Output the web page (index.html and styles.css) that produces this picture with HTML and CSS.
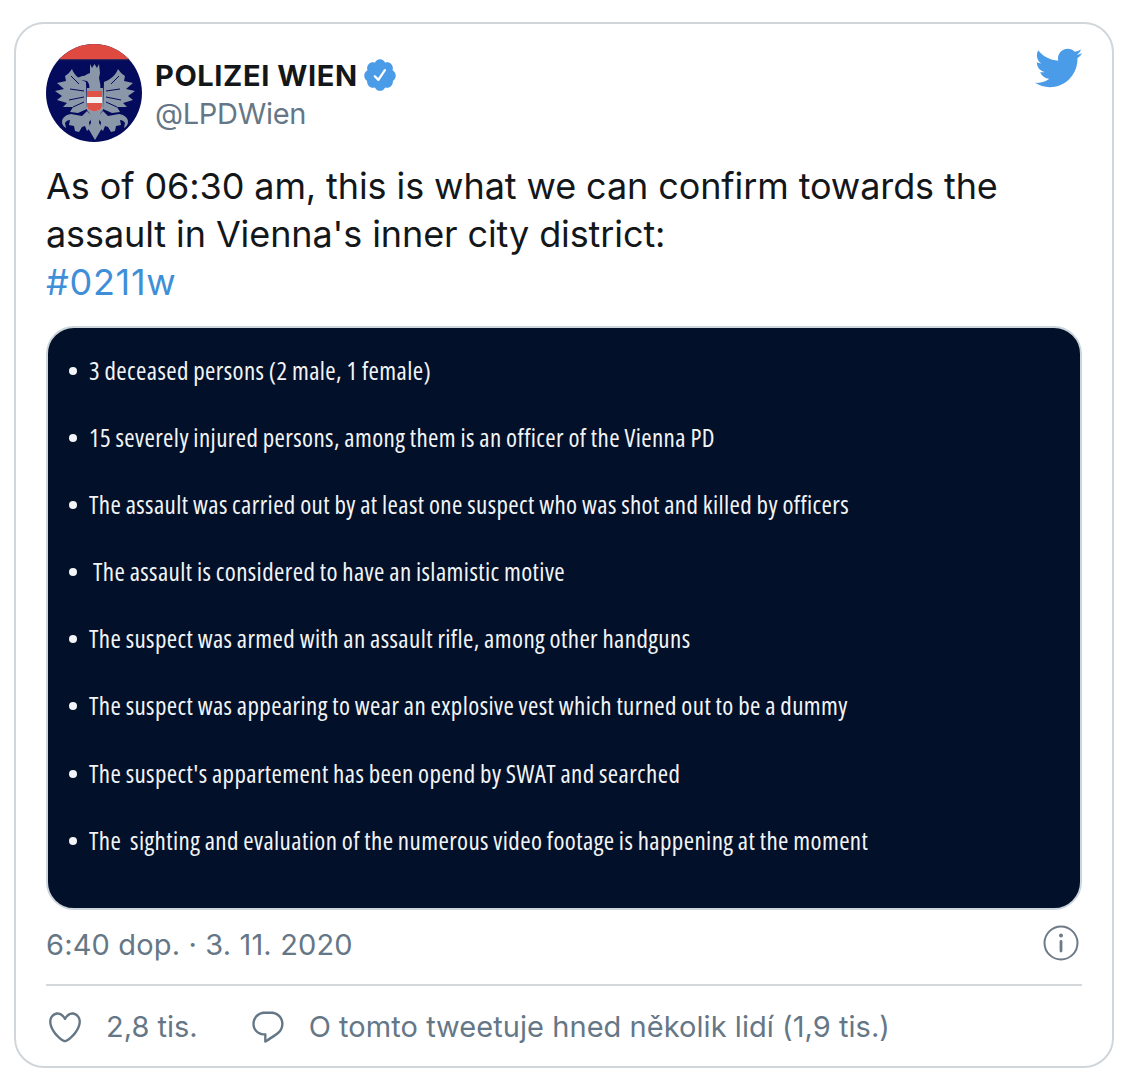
FILE: index.html
```html
<!DOCTYPE html>
<html lang="en">
<head>
<meta charset="utf-8">
<title>Polizei Wien tweet</title>
<link rel="stylesheet" href="styles.css">
</head>
<body>
<article class="card">
  <header class="head">
    <svg class="avatar" viewBox="0 0 96 98" aria-hidden="true">
      <defs>
        <clipPath id="round"><ellipse cx="48" cy="49" rx="48" ry="49"/></clipPath>
        <g id="wing">
          <path fill="#8a97a8" d="M26 25c2 6 8 11 14 13l1 27-9 4-8-1 3-5-10 0 4-4-10-3 5-4-7-5 9-2-7-6 9-2-1-5c3-2 5-4 7-7z"/>
          <path fill="none" stroke="#040a5c" stroke-width="1" d="M38 47l-14-2M38 53l-15 3M38 58l-11 5M33 40l-8-8"/>
          <path fill="#8a97a8" d="M41 67l-5 5-11-2c-6 1-9 4-9 8 0 3 2 5 4 6l-1-5c1-2 3-3 5-3l-1 5 5 1 1 5 4 1 3-5 3-1 2 5 3-3-1-6 4-5z"/>
        </g>
      </defs>
      <g clip-path="url(#round)">
        <rect width="96" height="98" fill="#040a5c"/>
        <rect width="96" height="15" fill="#de4a40"/>
        <rect y="15" width="96" height="1.200" fill="#3b2b58"/>
        <use href="#wing"/>
        <use href="#wing" transform="matrix(-1 0 0 1 98 0)"/>
        <g fill="#8a97a8">
          <path d="M44 20l2 4 2.500-4 2.500 4 2-4 1 9-1 5c1 5 2 8 1 12H43c1-4 0-7-2-9l-6-1-4-2 8-3 5-2z"/>
          <path d="M41 44h16v22l-3 4-1 9 3 5-7 12-7-12 3-5-1-9-3-4z"/>
        </g>
        <path fill="#040a5c" d="M33 30l6-1 2 1-3 2z"/>
        <path d="M41 47h15v15c0 3-3 5-7.500 5S41 65 41 62z" fill="#f3f0ef"/>
        <path d="M41 47h15v6H41zM41 59h15v3c0 3-3 5-7.500 5S41 65 41 62z" fill="#dd5347"/>
      </g>
    </svg>
    <div class="who">
      <div class="name"><span>POLIZEI WIEN</span><svg class="badge" viewBox="0 0 24 24" aria-hidden="true"><path fill="#fff" d="M6 7h12v10H6z"/><path fill="#4a9be8" d="M22.500 12.500c0-1.580-.875-2.950-2.148-3.600.154-.435.238-.905.238-1.400 0-2.210-1.710-3.998-3.818-3.998-.47 0-.92.084-1.336.25C14.818 2.415 13.510 1.500 12 1.500s-2.816.917-3.437 2.250c-.415-.165-.866-.25-1.336-.25-2.110 0-3.818 1.790-3.818 4 0 .494.083.964.237 1.400-1.272.65-2.147 2.018-2.147 3.600 0 1.495.782 2.798 1.942 3.486-.02.17-.032.34-.032.514 0 2.210 1.708 4 3.818 4 .47 0 .92-.086 1.335-.25.62 1.334 1.926 2.250 3.437 2.250 1.512 0 2.818-.916 3.437-2.250.415.163.865.248 1.336.248 2.110 0 3.818-1.790 3.818-4 0-.174-.012-.344-.033-.513 1.158-.687 1.943-1.990 1.943-3.484zm-6.616-3.334l-4.334 6.500c-.145.217-.382.334-.625.334-.143 0-.288-.04-.416-.126l-.115-.094-2.415-2.415c-.293-.293-.293-.768 0-1.060s.768-.294 1.060 0l1.770 1.767 3.825-5.740c.23-.345.696-.436 1.040-.207.346.23.44.696.21 1.040z"/></svg></div>
      <div class="handle">@LPDWien</div>
    </div>
    <svg class="bird" viewBox="0 0 24 24" aria-hidden="true"><path fill="#4a9be8" d="M23.643 4.937c-.835.37-1.732.62-2.675.733.962-.576 1.700-1.490 2.048-2.578-.9.534-1.897.922-2.958 1.130-.85-.904-2.060-1.470-3.400-1.470-2.572 0-4.658 2.086-4.658 4.660 0 .364.042.718.12 1.060-3.873-.195-7.304-2.050-9.602-4.868-.4.69-.63 1.490-.63 2.342 0 1.616.823 3.043 2.072 3.878-.764-.025-1.482-.234-2.110-.583v.06c0 2.257 1.605 4.140 3.737 4.568-.392.106-.803.162-1.227.162-.3 0-.593-.028-.877-.082.593 1.850 2.313 3.198 4.352 3.234-1.595 1.250-3.604 1.995-5.786 1.995-.376 0-.747-.022-1.112-.065 2.062 1.323 4.510 2.093 7.140 2.093 8.570 0 13.255-7.098 13.255-13.254 0-.2-.005-.402-.014-.602.91-.658 1.700-1.477 2.323-2.410z"/></svg>
  </header>
  <p class="body">As of 06:30 am, this is what we can confirm towards the<br>assault in Vienna's inner city district:<br><a class="tag">#0211w</a></p>
  <ul class="media">
    <li>3 deceased persons (2 male, 1 female)</li>
    <li>15 severely injured persons, among them is an officer of the Vienna PD</li>
    <li>The assault was carried out by at least one suspect who was shot and killed by officers</li>
    <li class="indent">The assault is considered to have an islamistic motive</li>
    <li>The suspect was armed with an assault rifle, among other handguns</li>
    <li>The suspect was appearing to wear an explosive vest which turned out to be a dummy</li>
    <li>The suspect's appartement has been opend by SWAT and searched</li>
    <li>The  sighting and evaluation of the numerous video footage is happening at the moment</li>
  </ul>
  <div class="meta">
    <span class="date">6:40 dop. · 3. 11. 2020</span>
    <svg class="info" viewBox="0 0 36 36" aria-hidden="true"><circle cx="18" cy="18" r="16.500" fill="none" stroke="#6e7a87" stroke-width="2"/><circle cx="18" cy="10.500" r="2" fill="#6e7a87"/><rect x="16.600" y="15" width="2.800" height="12.500" rx="1.400" fill="#6e7a87"/></svg>
  </div>
  <div class="actions">
    <svg class="act-icon" viewBox="0 0 24 24" aria-hidden="true"><path d="M12 21.638h-.014C9.403 21.590 1.950 14.856 1.950 8.478c0-3.064 2.525-5.754 5.403-5.754 2.290 0 3.830 1.580 4.646 2.730.814-1.148 2.354-2.730 4.645-2.730 2.880 0 5.404 2.690 5.404 5.755 0 6.376-7.454 13.110-10.037 13.157H12zM7.354 4.225c-2.080 0-3.903 1.988-3.903 4.255 0 5.740 7.034 11.596 8.550 11.658 1.518-.062 8.550-5.917 8.550-11.658 0-2.267-1.823-4.255-3.903-4.255-2.528 0-3.940 2.936-3.952 2.965-.23.562-1.156.562-1.387 0-.014-.03-1.425-2.965-3.954-2.965z"/></svg>
    <span class="likes">2,8 tis.</span>
    <svg class="act-icon" viewBox="0 0 24 24" aria-hidden="true"><path d="M14.046 2.242l-4.148-.01h-.002c-4.374 0-7.800 3.427-7.800 7.802 0 4.098 3.186 7.206 7.465 7.370v3.828c0 .108.044.286.12.403.142.225.384.347.632.347.138 0 .277-.038.402-.118.264-.168 6.473-4.140 8.088-5.506 1.902-1.610 3.040-3.970 3.043-6.312v-.017c-.006-4.367-3.430-7.787-7.800-7.788zm3.787 12.972c-1.134.96-4.862 3.405-6.772 4.643V16.670c0-.414-.335-.75-.75-.75h-.396c-3.660 0-6.318-2.476-6.318-5.886 0-3.534 2.768-6.302 6.300-6.302l4.147.01h.002c3.532 0 6.300 2.766 6.302 6.296-.003 1.910-.942 3.844-2.514 5.176z"/></svg>
    <span class="talk">O tomto tweetuje hned několik lidí (1,9 tis.)</span>
  </div>
</article>
</body>
</html>
```
FILE: styles.css
```css
* { box-sizing: border-box; }
html, body { margin: 0; background: #fff; }
body { padding: 22px 14px 0 14px; font-family: Inter, Roboto, sans-serif; }
.card {
  width: 1100px; height: 1046px;
  border: 2px solid #d1d6da; border-radius: 30px;
  padding: 20px 30px 0;
  display: flex; flex-direction: column;
}
.head { display: flex; align-items: flex-start; height: 98px; }
.avatar { width: 96px; height: 98px; flex: none; }
.who { margin-left: 13px; padding-top: 13px; }
.name { display: flex; align-items: center; font-size: 29px; line-height: 38px; font-weight: 700; color: #14171a; letter-spacing: .6px; }
.badge { width: 36px; height: 36px; margin-left: 4px; margin-top: -2px; }
.handle { font-size: 29px; line-height: 38px; color: #657786; letter-spacing: -.3px; }
.bird { width: 50px; height: 50px; margin-left: auto; margin-top: -1px; margin-right: -1px; }
.body { margin: 20px 0 0; font-size: 36px; line-height: 48px; color: #14171a; white-space: nowrap; letter-spacing: -.1px; }
.tag { color: #3f8fd8; letter-spacing: .7px; }
.media {
  margin: 20px 0 0; padding: 11px 0 0 41px; list-style: none;
  width: 1036px; height: 584px;
  background: #021029; border-radius: 28px; border: 2px solid #cdd6dd;
  color: #f2f4f6; font-family: "Open Sans", sans-serif; font-stretch: 75%;
  font-size: 25px; letter-spacing: .4px; word-spacing: -.6px;
  flex: none;
}
.media li { height: 67.1px; line-height: 63px; position: relative; white-space: pre; }
.media li::before { content: ""; position: absolute; left: -20px; top: 28px; width: 8px; height: 8px; border-radius: 50%; background: #f2f4f6; }
.media .indent { padding-left: 4px; }
.meta { display: flex; justify-content: space-between; align-items: center; height: 76px; padding-bottom: 5px; border-bottom: 2px solid #d4d8db; font-size: 29px; color: #657786; flex: none; }
.date { letter-spacing: .15px; }
.info { width: 36px; height: 36px; margin-right: 3px; margin-bottom: 3px; }
.actions { display: flex; align-items: center; height: 81px; font-size: 29px; color: #657786; flex: none; }
.act-icon { width: 38px; height: 38px; fill: #657786; }
.likes { margin-left: 22px; margin-right: 51px; }
.talk { margin-left: 22px; letter-spacing: .05px; }
```
